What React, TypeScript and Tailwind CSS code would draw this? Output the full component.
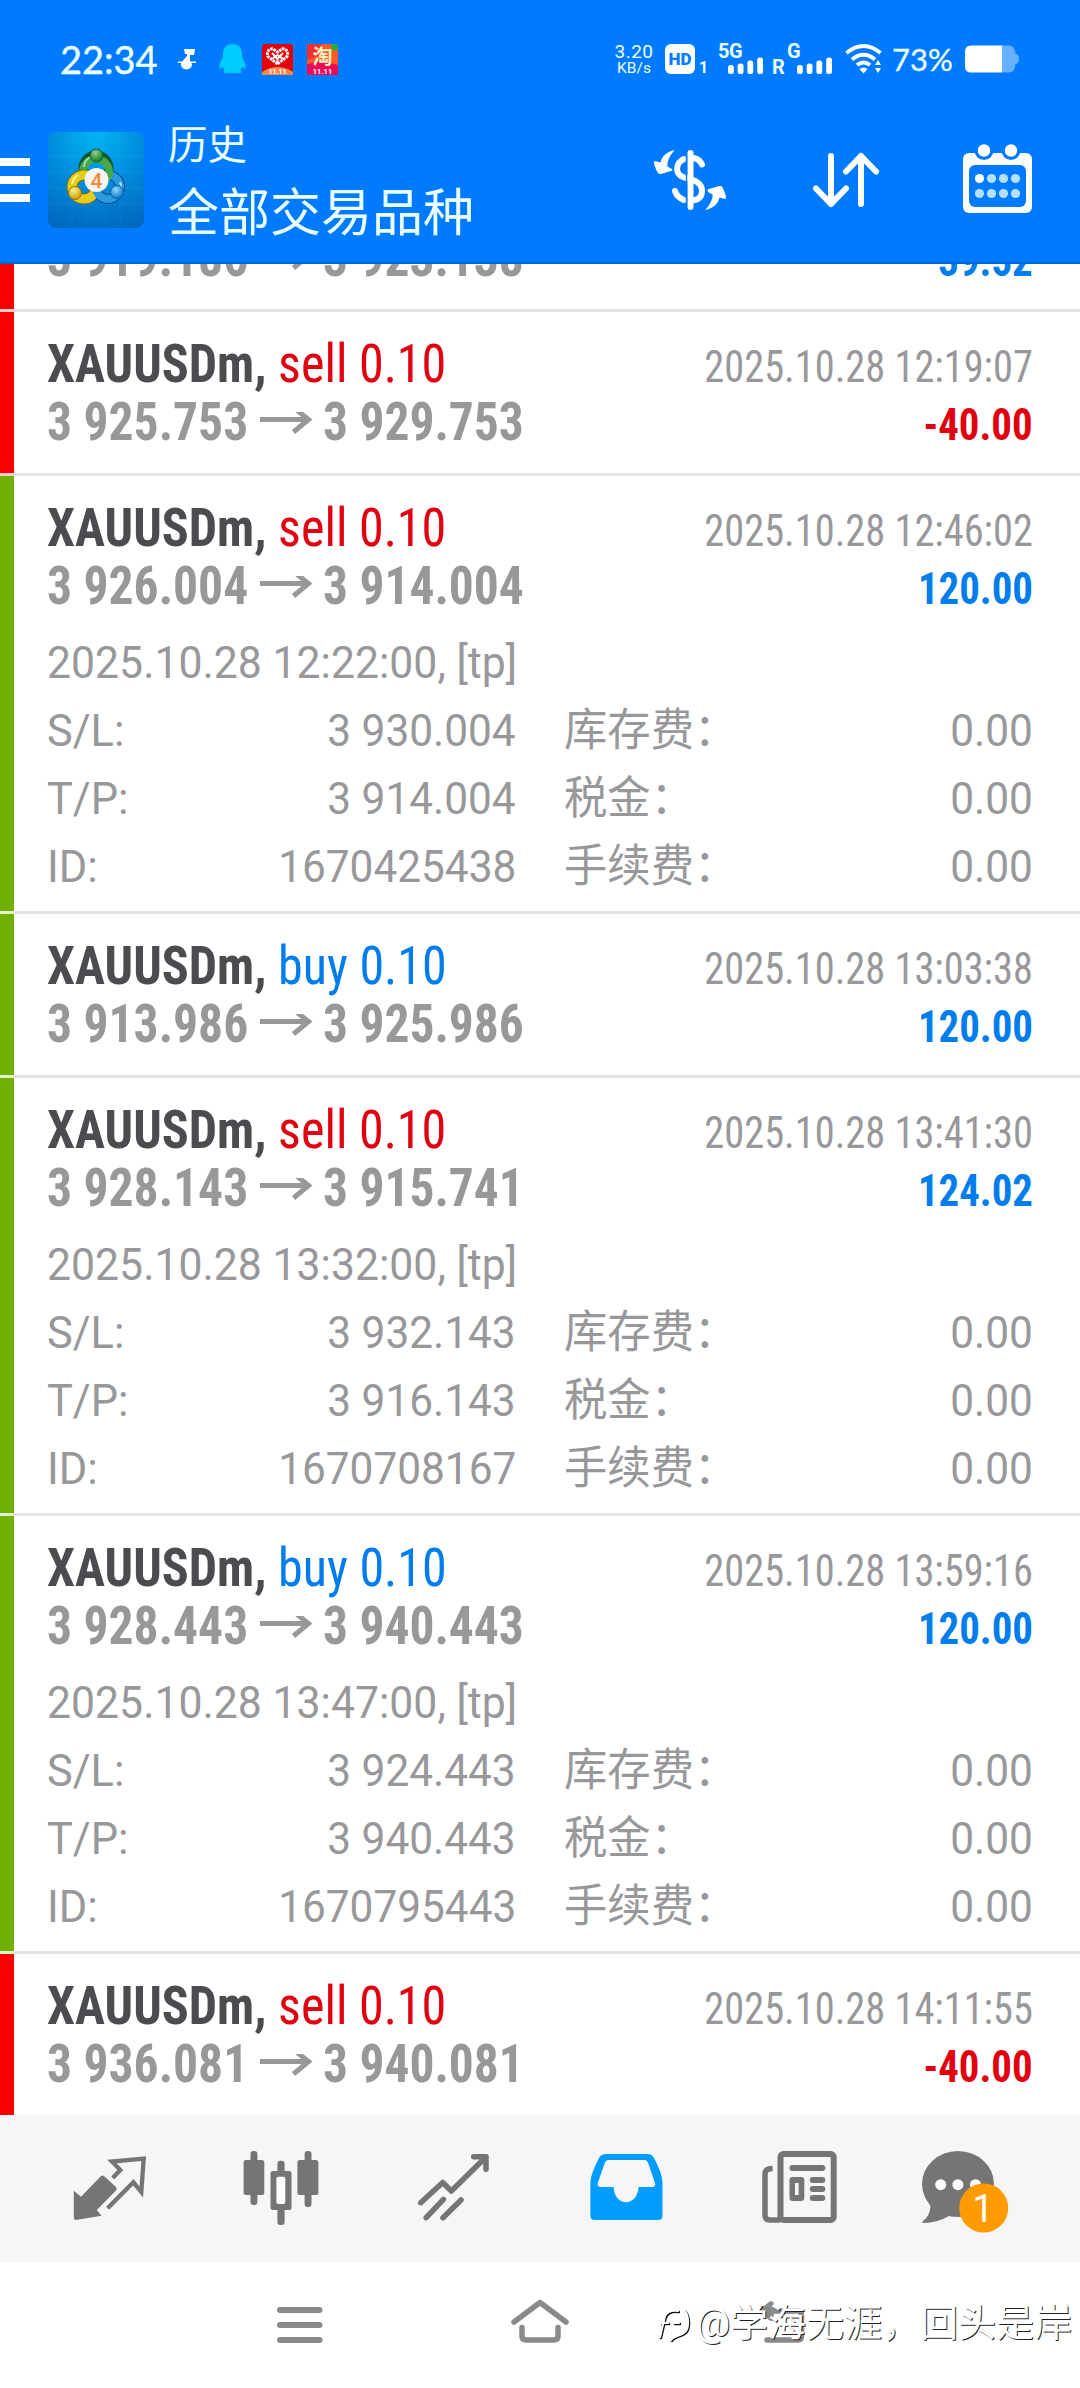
import type { ReactNode } from "react";

type Deal = {
  side: "sell" | "buy";
  open: string;
  close: string;
  time: string;
  profit: string;
  win: boolean;
  details?: { opened: string; sl: string; tp: string; id: string };
};

const deals: Deal[] = [
  { side: "sell", open: "3 925.753", close: "3 929.753", time: "2025.10.28 12:19:07", profit: "-40.00", win: false },
  {
    side: "sell", open: "3 926.004", close: "3 914.004", time: "2025.10.28 12:46:02", profit: "120.00", win: true,
    details: { opened: "2025.10.28 12:22:00, [tp]", sl: "3 930.004", tp: "3 914.004", id: "1670425438" },
  },
  { side: "buy", open: "3 913.986", close: "3 925.986", time: "2025.10.28 13:03:38", profit: "120.00", win: true },
  {
    side: "sell", open: "3 928.143", close: "3 915.741", time: "2025.10.28 13:41:30", profit: "124.02", win: true,
    details: { opened: "2025.10.28 13:32:00, [tp]", sl: "3 932.143", tp: "3 916.143", id: "1670708167" },
  },
  {
    side: "buy", open: "3 928.443", close: "3 940.443", time: "2025.10.28 13:59:16", profit: "120.00", win: true,
    details: { opened: "2025.10.28 13:47:00, [tp]", sl: "3 924.443", tp: "3 940.443", id: "1670795443" },
  },
  { side: "sell", open: "3 936.081", close: "3 940.081", time: "2025.10.28 14:11:55", profit: "-40.00", win: false },
];

function Prices({ open, close, profit, loss }: { open: string; close: string; profit: string; loss: boolean }) {
  return (
    <div className="flex h-[58px] items-baseline whitespace-nowrap text-[54px] leading-[58px] font-bold [font-stretch:75%] text-[#98989b]">
      <span className="w-[213px] origin-left scale-x-[0.918]">{open}</span>
      <svg className="w-[63px] h-[28px] shrink-0" viewBox="0 0 63 28" fill="none" stroke="#98989b">
        <path d="M0 7.500H49" strokeWidth="4.800" />
        <path d="M33.500 -4.500L48.500 7.500L33.500 20" strokeWidth="5" />
      </svg>
      <span className="origin-left scale-x-[0.916]">{close}</span>
      <span
        className={
          "ml-auto origin-right scale-x-[0.928] text-[44px] leading-none " + (loss ? "text-[#e0000f]" : "text-[#007dec]")
        }
      >
        {profit}
      </span>
    </div>
  );
}

function DetailLine({ label, value, fee }: { label: string; value: string; fee: string }) {
  return (
    <div className="flex h-[68px] items-baseline">
      <span className="origin-left scale-x-[0.985]">{label}</span>
      <span className="ml-auto origin-right scale-x-[0.963]">{value}</span>
      <div className="ml-[48px] flex w-[469px] items-baseline">
        <span className="origin-left scale-x-[0.963] text-[45px] font-normal">{fee}</span>
        <span className="ml-auto origin-right scale-x-[0.963]">0.00</span>
      </div>
    </div>
  );
}

function DealRow({ deal, last }: { deal: Deal; last: boolean }) {
  const d = deal.details;
  return (
    <div className={"flex shrink-0 " + (d ? "h-[438px]" : last ? "h-[161px]" : "h-[164px]")}>
      <div
        className={
          "w-[13.500px] shrink-0 " +
          (last ? "" : "border-b-[3px] ") +
          (deal.win ? "border-[#e2f3c6] bg-[#70b000]" : "border-[#ffcdcd] bg-[#fb0000]")
        }
      />
      <div className={"flex-1 pt-[23px] pr-[47px] pl-[33px] " + (last ? "" : "border-b-[3px] border-[#e3e3e4]")}>
        <div className="flex h-[58px] items-baseline whitespace-nowrap text-[54px] leading-[58px] [font-stretch:75%]">
          <span className="origin-left scale-x-[0.928]">
            <b className="font-bold text-[#4b4b50]">XAUUSDm,</b>{" "}
            <span className={deal.side === "sell" ? "text-[#e0000f]" : "text-[#007dec]"}>{deal.side} 0.10</span>
          </span>
          <span className="ml-auto origin-right scale-x-[0.918] text-[44px] leading-none text-[#98989b]">{deal.time}</span>
        </div>
        <Prices open={deal.open} close={deal.close} profit={deal.profit} loss={deal.profit.startsWith("-")} />
        {d && (
          <div className="mt-[14px] text-[44px] leading-[68px] whitespace-nowrap text-[#98989b]">
            <div className="h-[68px] w-fit origin-left scale-x-[0.972]">{d.opened}</div>
            <DetailLine label="S/L:" value={d.sl} fee="库存费：" />
            <DetailLine label="T/P:" value={d.tp} fee="税金：" />
            <DetailLine label="ID:" value={d.id} fee="手续费：" />
          </div>
        )}
      </div>
    </div>
  );
}

function SignalBars() {
  return (
    <svg className="h-[17px] w-[36px]" viewBox="0 0 36 17" fill="#fff">
      <rect x="0" y="8" width="5.800" height="9" rx="2.500" />
      <rect x="9.700" y="6.500" width="5.800" height="10.500" rx="2.500" />
      <rect x="19.400" y="3.500" width="5.800" height="13.500" rx="2.500" />
      <rect x="29.200" y="0.500" width="5.800" height="16.500" rx="2.500" />
    </svg>
  );
}

function StatusBar() {
  return (
    <div className="flex h-[118px] items-center pl-[60px] font-[Lato] text-[#eaffff]">
      <span className="w-[118px] text-[38px] leading-none [-webkit-text-stroke:0.4px_#eaffff]">22:34</span>
      <svg className="h-[30px] w-[18px]" viewBox="0 0 18 30" fill="#fff">
        <path d="M6 5H17L16 11H12V17C15 19 15 25 8.500 25.500C2 25 2 19 4.500 17L9 12V10H7Z" />
        <path d="M0 17.500H18V19H0Z" />
      </svg>
      <svg className="ml-[23px] h-[30px] w-[27px]" viewBox="0 0 27 30" fill="#00cdff">
        <path d="M13.500 0C20 0 23.500 4.500 23 11C23 14 24 15.500 25.500 18C27 21 27 24 26 25C25 25 24 23 23.300 22.500C23 24 22 25.500 21 26.300C23 27 23 29 21 29H6C4 29 4 27 6 26.300C5 25.500 4 24 3.700 22.500C3 23 2 25 1 25C0 24 0 21 1.500 18C3 15.500 4 14 4 11C3.500 4.500 7 0 13.500 0Z" />
      </svg>
      <svg className="ml-[16px] h-[31px] w-[31px]" viewBox="0 0 31 31">
        <rect width="31" height="31" rx="3" fill="#e3000b" />
        <path d="M0 28Q8 23 15.500 23Q23 23 31 28V31H0Z" fill="#f58a4a" />
        <path
          d="M15.500 20L6 12.500C4 8 7.500 4 11 5L15.500 8L20 5C23.500 4 27 8 25 12.500Z"
          fill="#e3000b" stroke="#fff" strokeWidth="3" strokeDasharray="2.600 0.800"
        />
        <path d="M10 9L15.500 15L21 9M10 15L15.500 11L21 15M15.500 15V20" fill="none" stroke="#fff" strokeWidth="1.900" />
        <text x="15.500" y="29.500" textAnchor="middle" fontFamily="Roboto" fontWeight="700" fontSize="7" fill="#fff">11.11</text>
      </svg>
      <svg className="ml-[14px] h-[31px] w-[31px]" viewBox="0 0 31 31">
        <rect width="31" height="31" rx="3" fill="#fa5a2a" />
        <path d="M0 0H15V10L0 16Z" fill="#f03030" />
        <path d="M0 20L15 17L31 21V31H0Z" fill="#ee0a55" />
        <circle cx="27.500" cy="3" r="3.500" fill="#1fae3f" />
        <text x="15.500" y="19.500" textAnchor="middle" fontFamily="Noto Sans CJK SC" fontWeight="700" fontSize="20" fill="#fff3c4">淘</text>
        <text x="15.500" y="29.500" textAnchor="middle" fontFamily="Roboto" fontWeight="700" fontSize="7.500" fill="#fff">11.11</text>
      </svg>
      <div className="ml-[276px] flex w-[40px] flex-col items-center font-[Roboto] leading-none">
        <span className="text-[19px] leading-[18px] tracking-[0.5px]">3.20</span>
        <span className="text-[15.500px] leading-[15px]">KB/s</span>
      </div>
      <div className="ml-[11px] flex h-[30px] w-[30px] items-center justify-center rounded-[6px] bg-white font-[Roboto] text-[17px] leading-none font-black text-[#007bff]">
        HD
      </div>
      <span className="mt-[17px] ml-[4px] w-[10px] font-[Roboto] text-[16px] leading-none font-bold">1</span>
      <div className="ml-[9px] flex h-[30px] w-[46px] flex-col font-[Roboto] text-[20px] leading-[15px] font-bold tracking-[-0.5px]">
        <span className="h-[13px]">5G</span>
        <span className="flex self-end"><SignalBars /></span>
      </div>
      <span className="mt-[16px] ml-[8px] w-[14px] font-[Roboto] text-[20px] leading-none font-bold">R</span>
      <div className="ml-[1px] flex h-[30px] w-[46px] flex-col font-[Roboto] text-[20px] leading-[15px] font-bold">
        <span className="h-[13px]">G</span>
        <span className="flex self-end"><SignalBars /></span>
      </div>
      <svg className="ml-[12px] h-[30px] w-[38px]" viewBox="0 0 38 30" fill="none" stroke="#fff" strokeWidth="4">
        <path d="M1.500 9Q18.500 -5 35.500 9" />
        <path d="M7 15.500Q18.500 6 30 15.500" />
        <path d="M12 21Q18.500 16 25 21" />
        <path d="M14.500 25Q18.500 22 22.500 25L18.500 29.500Z" fill="#fff" stroke="none" />
        <path d="M30 21L33 16L36 21ZM30 24L33 29L36 24Z" fill="#fff" stroke="none" />
      </svg>
      <span className="ml-[9px] w-[73px] text-[31px] leading-none [-webkit-text-stroke:0.3px_#eaffff]">73%</span>
      <svg className="h-[28px] w-[54px]" viewBox="0 0 54 28">
        <path d="M37 0.500H45Q50 1.500 50.500 9Q54 9 54 14Q54 19 50.500 19Q50 26.500 45 27.500H37Z" fill="#66b0ff" />
        <path d="M6 0.500H37V27.500H6Q0 27.500 0 21.500V6.500Q0 0.500 6 0.500Z" fill="#fff" />
      </svg>
    </div>
  );
}

function AppLogo() {
  return (
    <svg className="h-[96px] w-[96px]" viewBox="0 0 96 96">
      <defs>
        <radialGradient id="tile" cx="0.5" cy="0.05" r="1">
          <stop offset="0" stopColor="#00b4f2" />
          <stop offset="0.5" stopColor="#008bdc" />
          <stop offset="1" stopColor="#0068bd" />
        </radialGradient>
        <radialGradient id="green" cx="0.4" cy="0.3" r="0.7">
          <stop offset="0" stopColor="#8fd08a" />
          <stop offset="1" stopColor="#127a2c" />
        </radialGradient>
        <radialGradient id="yellow" cx="0.4" cy="0.3" r="0.7">
          <stop offset="0" stopColor="#fff08a" />
          <stop offset="1" stopColor="#c79a08" />
        </radialGradient>
        <radialGradient id="blue" cx="0.4" cy="0.3" r="0.7">
          <stop offset="0" stopColor="#8fd8ff" />
          <stop offset="1" stopColor="#0b78c8" />
        </radialGradient>
      </defs>
      <rect width="96" height="96" rx="8" fill="url(#tile)" />
      <path d="M24 0V96M40 0V96M56 0V96M72 0V96M0 24H96M0 40H96M0 56H96M0 72H96" stroke="#fff" strokeOpacity="0.06" />
      <circle cx="48" cy="36" r="13" fill="none" stroke="#0c5a35" strokeWidth="9" />
      <circle cx="36" cy="55" r="12" fill="none" stroke="#7a6a08" strokeWidth="11" />
      <circle cx="60" cy="55" r="12" fill="none" stroke="#0a4f8c" strokeWidth="10" />
      <circle cx="36" cy="55" r="12" fill="none" stroke="#e6cc1a" strokeWidth="9" />
      <circle cx="60" cy="55" r="12" fill="none" stroke="#2a9ade" strokeWidth="8" />
      <path d="M35 38A13 13 0 1 1 61 42L58 48" fill="none" stroke="#46a84c" strokeWidth="7.500" />
      <path d="M36 35A12.500 12.500 0 0 1 42 25" fill="none" stroke="#a5dba0" strokeWidth="2" />
      <path d="M24 52A13 13 0 0 1 30 43" fill="none" stroke="#fff59a" strokeWidth="2" />
      <path d="M72 50A13 13 0 0 1 73 56" fill="none" stroke="#a5e0ff" strokeWidth="2" />
      <circle cx="48.500" cy="23.500" r="6.500" fill="url(#green)" stroke="#0e6428" />
      <circle cx="27" cy="61" r="6.500" fill="url(#yellow)" stroke="#94740c" />
      <circle cx="69" cy="60" r="6.500" fill="url(#blue)" stroke="#0a5c9c" />
      <circle cx="48.500" cy="48" r="12" fill="#f7f4f2" />
      <text x="48.500" y="55.500" textAnchor="middle" fontFamily="Roboto" fontWeight="500" fontSize="21" fill="#f08a3c">4</text>
    </svg>
  );
}

function Header() {
  return (
    <header className="flex h-[264px] shrink-0 flex-col border-b-2 border-[#0069dc] bg-[#007bff]">
      <StatusBar />
      <div className="flex h-[124px] items-center">
        <div className="flex w-[30px] flex-col gap-[10px]">
          <div className="h-2 bg-white" />
          <div className="h-2 bg-white" />
          <div className="h-2 bg-white" />
        </div>
        <div className="ml-[18px]"><AppLogo /></div>
        <div className="ml-[24px] flex w-[485px] flex-col text-[#eaffff]">
          <span className="h-[60px] text-[39.500px] leading-[60px]">历史</span>
          <span className="h-[68px] text-[51px] leading-[76px]">全部交易品种</span>
        </div>
        <svg className="h-[72px] w-[74px]" viewBox="0 0 74 72" fill="none" stroke="#fff" strokeLinecap="round">
          <path d="M37.500 9V63" strokeWidth="6" />
          <path d="M31 15C22 19 22 30 30 33C36 35.500 49 36 49 47C49 54 44 56.500 38 56.500" strokeWidth="6" />
          <path d="M41 14C45 15 47.500 17 49 20.500M22 47C23 51 26 54 31 56" strokeWidth="6" />
          <path d="M21.700 6C14 7.500 9 12 7.500 18.500L2 17Q1 17 1 19C2 24 4 28 6 30H8L19.500 26.500L19 25L14.500 22.500C14 17 17 11 21.700 6Z" fill="#fff" stroke="none" />
          <path d="M52.300 66C60 64.500 65 60 66.500 53.500L72 55Q73 55 73 53C72 48 70 44 68.500 42H66L54.500 45.500L55 48L59.500 50.500C60 55 57 61 52.300 66Z" fill="#fff" stroke="none" />
          <path d="M33.500 12V62" stroke="#007bff" strokeWidth="1.400" />
        </svg>
        <svg className="ml-[84px] h-[60px] w-[70px]" viewBox="0 0 70 60" fill="none" stroke="#fff" strokeWidth="6" strokeLinecap="round" strokeLinejoin="round">
          <path d="M20 6V54M5 38.500L20 54L35 38.500M50 54V6M35 21.500L50 6L65 21.500" />
        </svg>
        <svg className="ml-[82px] h-[72px] w-[70px]" viewBox="0 0 70 72">
          <rect x="0" y="9" width="69" height="60" rx="6" fill="#fff" />
          <circle cx="21" cy="6.500" r="9.500" fill="#007bff" />
          <circle cx="48" cy="6.500" r="9.500" fill="#007bff" />
          <rect x="6" y="21" width="57" height="42" rx="6" fill="#007bff" />
          <circle cx="21" cy="6.500" r="6.200" fill="#fff" />
          <circle cx="48" cy="6.500" r="6.200" fill="#fff" />
          <circle cx="16.500" cy="34.500" r="4.600" fill="#fff" />
          {[28.5, 40.5, 52.5].map((x) => <circle key={x} cx={x} cy="34.500" r="4.600" fill="#b5e0ff" />)}
          {[16.5, 28.5, 40.5, 52.5].map((x) => <circle key={x} cx={x} cy="49.500" r="4.600" fill="#b5e0ff" />)}
        </svg>
      </div>
    </header>
  );
}

function Tab({ children }: { children: ReactNode }) {
  return (
    <svg className="h-[147px] w-[120px]" viewBox="0 0 120 147" fill="#757575" stroke="none">
      {children}
    </svg>
  );
}

function TabBar() {
  return (
    <nav className="flex h-[147px] shrink-0 justify-around bg-[#f6f6f6] px-[23px]">
      <Tab>
        <path d="M24.800 75.700L32 81.700L51.500 61.500Q53.400 59.500 55.500 61.500L67 72Q68.500 73.700 67 75.500L47.900 95L52.400 100.700L27 105Q24.800 105 24.800 102.500Z" />
        <path d="M63.700 63L71.300 55L63 46.500L94.700 43.700L92.300 77L84.400 67.300L58.600 93.300" fill="none" stroke="#757575" strokeWidth="4.300" />
      </Tab>
      <Tab>
        <rect x="22.600" y="45" width="20.700" height="35" rx="2.500" />
        <rect x="29.500" y="36" width="6.900" height="54" rx="3" />
        <rect x="56.400" y="45.700" width="7.200" height="64.300" rx="3" />
        <rect x="49.500" y="56" width="21" height="39" rx="2.500" />
        <rect x="55.400" y="61.700" width="8.900" height="27.300" rx="2" fill="#fff" />
        <rect x="76.400" y="45" width="21" height="35" rx="2.500" />
        <rect x="83.600" y="36" width="6.900" height="56" rx="3" />
      </Tab>
      <Tab>
        <path
          d="M26.700 87.700L48.700 67.500L57.300 76L92 42M79.700 41.700H92V54.300M32.200 102.700L49.400 84.300M49 102.700L67 85"
          fill="none" stroke="#757575" strokeWidth="5.500" strokeLinecap="round" strokeLinejoin="round"
        />
      </Tab>
      <Tab>
        <path
          fillRule="evenodd" fill="#009dff"
          d="M41 39H81Q86 39 88 43Q96 58 96.500 67V101Q96.500 105 92 105H29Q24.400 105 24.400 101V67Q25 58 33 43Q35 39 41 39ZM42 45Q40 45 39 47.500L31.700 68Q31 72 35 72H47.500C48 82 54 87.300 60 87.300C66 87.300 72 82 72.600 72H86Q90 72 89 68L82 47.500Q81 45 79 45Z"
        />
      </Tab>
      <Tab>
        <rect x="42.500" y="39" width="53.200" height="66" rx="3" fill="none" stroke="#757575" strokeWidth="6" />
        <path d="M34.600 53.500Q27 53.500 27 59V100Q27 105 32 105H42" fill="none" stroke="#757575" strokeWidth="5.500" />
        <rect x="51.500" y="50" width="35.800" height="6" rx="3" />
        <path fillRule="evenodd" d="M54.500 62H63.300Q66.300 62 66.300 65V83Q66.300 86 63.300 86H54.500Q51.500 86 51.500 83V65Q51.500 62 54.500 62ZM57 68V80H60.600V68Z" />
        <rect x="71.800" y="62" width="15.500" height="6" rx="3" />
        <rect x="71.800" y="71" width="15.500" height="6" rx="3" />
        <rect x="71.800" y="80" width="15.500" height="6" rx="3" />
      </Tab>
      <Tab>
        <ellipse cx="47" cy="69" rx="36" ry="33" />
        <path d="M16 84L19.400 91Q19 101 12 106Q10.500 107.500 12.500 108Q26 108 38 101L46 90Z" />
        <circle cx="29.700" cy="69.700" r="5.500" fill="#fff" />
        <circle cx="46.900" cy="69.700" r="5.500" fill="#fff" />
        <circle cx="64.500" cy="69.700" r="5.500" fill="#fff" />
        <circle cx="72.700" cy="93" r="24.500" fill="#ff9a00" />
        <text x="72" y="107" textAnchor="middle" fontFamily="Roboto" fontSize="38" fill="#fff">1</text>
      </Tab>
    </nav>
  );
}

function SystemNav() {
  return (
    <div className="relative flex h-[126px] shrink-0 bg-white pl-[270px]">
      <svg className="h-[126px] w-[60px]" viewBox="0 0 60 126" stroke="#8a8a8a" strokeWidth="6" strokeLinecap="round">
        <path d="M10 48H49.500M10 63H49.500M10 78H49.500" />
      </svg>
      <svg className="ml-[180px] h-[126px] w-[60px]" viewBox="0 0 60 126" fill="none" stroke="#8a8a8a" strokeWidth="5.500" strokeLinecap="round" strokeLinejoin="round">
        <path d="M4 60L30 40.500L56 60M12 65.500V74Q12 78 16 78H44Q48 78 48 74V65.500" />
      </svg>
      <svg className="ml-[182px] h-[126px] w-[60px]" viewBox="0 0 60 126" fill="none" stroke="#8a8a8a" strokeWidth="5.500" strokeLinecap="round" strokeLinejoin="round">
        <path d="M19 42L10 49L19 56Z" fill="#8a8a8a" />
        <path d="M10 49H46Q49.500 49 49.500 53V74Q49.500 78 46 78H15" />
      </svg>
      <div className="absolute top-[39px] right-[8px] flex items-center text-white">
        <svg className="h-[44px] w-[36px] overflow-visible" viewBox="0 0 36 44" fill="none" strokeLinecap="round">
          <path d="M4 36L8 19M5 22H12M8 19C9 11 15 9 22 10M18 22H23M28 9C33 14 33 25 30 30C26 35 18 34 15 39" stroke="#111" strokeWidth="2.400" transform="translate(1 1)" />
          <path d="M4 36L8 19M5 22H12M8 19C9 11 15 9 22 10M18 22H23M28 9C33 14 33 25 30 30C26 35 18 34 15 39" stroke="#fff" strokeWidth="2.200" />
        </svg>
        <span className="ml-[4px] text-[38px] leading-[44px] whitespace-nowrap [text-shadow:1px_1px_0_#222]">@学海无涯，回头是岸</span>
      </div>
    </div>
  );
}

export default function App() {
  return (
    <div className="flex h-[2388px] w-[1080px] flex-col overflow-hidden bg-white font-[Roboto,'Noto_Sans_CJK_SC',sans-serif]">
      <Header />
      <main className="flex h-[1851px] shrink-0 flex-col overflow-hidden">
        <div className="flex h-[48px] shrink-0">
          <div className="w-[13.500px] border-b-[3px] border-[#ffcdcd] bg-[#fb0000]" />
          <div className="flex flex-1 flex-col justify-end overflow-hidden border-b-[3px] border-[#e3e3e4] pr-[47px] pb-[22px] pl-[33px]">
            <Prices open="3 919.186" close="3 923.138" profit="39.52" loss={false} />
          </div>
        </div>
        {deals.map((deal, i) => (
          <DealRow key={deal.time} deal={deal} last={i === deals.length - 1} />
        ))}
      </main>
      <TabBar />
      <SystemNav />
    </div>
  );
}
